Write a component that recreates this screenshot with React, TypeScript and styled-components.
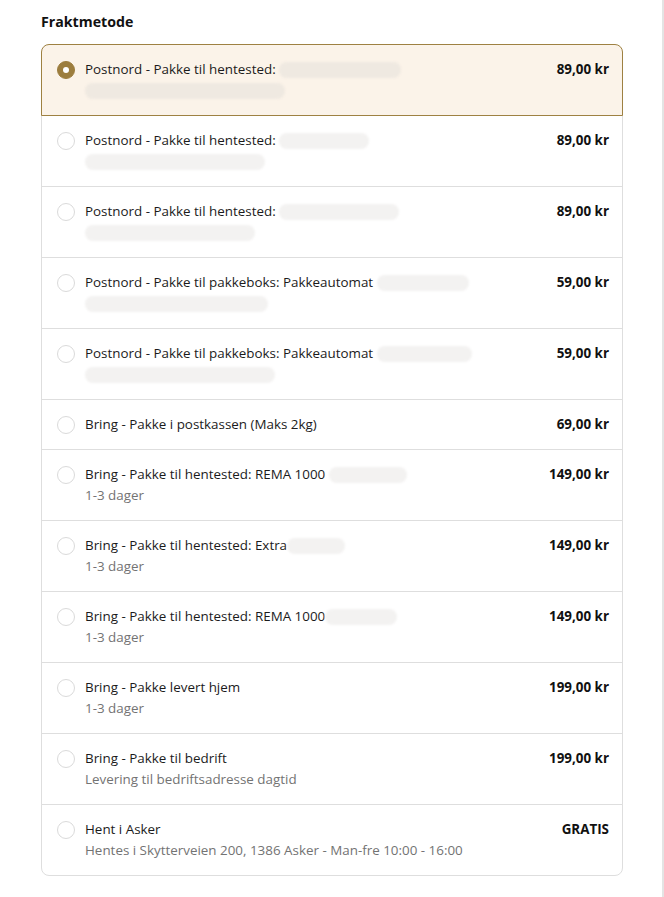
import React from "react";
import styled, { createGlobalStyle } from "styled-components";

const Global = createGlobalStyle`
  html, body { margin: 0; padding: 0; background: #ffffff; }
  body { font-family: "Open Sans", "Noto Sans", Arial, sans-serif; color: #1b1b1b; }
  * { box-sizing: border-box; }
`;

const Page = styled.div`
  width: 664px;
  min-height: 897px;
  display: flex;
`;

const Main = styled.main`
  width: 664px;
  border-right: 2px solid #e4e4e4;
  padding: 11px 39px 20px 41px;
`;

const Heading = styled.h2`
  margin: 0 0 11px;
  font-size: 14.2px;
  line-height: 22px;
  font-weight: 700;
  color: #111;
`;

const Card = styled.div`
  display: flex;
  flex-direction: column;
`;

const Row = styled.label<{ $selected?: boolean; $first?: boolean; $last?: boolean }>`
  position: relative;
  display: flex;
  align-items: flex-start;
  gap: 10px;
  padding: 14px 13px 14px 15px;
  margin-top: ${(p) => (p.$first ? "0" : "-1px")};
  border: 1px solid ${(p) => (p.$selected ? "#9e8142" : "#dedede")};
  background: ${(p) => (p.$selected ? "#fbf3e9" : "#ffffff")};
  border-radius: ${(p) => (p.$first ? "8px 8px 0 0" : p.$last ? "0 0 8px 8px" : "0")};
  z-index: ${(p) => (p.$selected ? 1 : 0)};
  cursor: pointer;
`;

const Radio = styled.span<{ $checked?: boolean }>`
  flex: 0 0 18px;
  width: 18px;
  height: 18px;
  margin-top: 1.5px;
  border-radius: 50%;
  display: flex;
  align-items: center;
  justify-content: center;
  background: ${(p) => (p.$checked ? "#9c7d3e" : "#ffffff")};
  border: 1px solid ${(p) => (p.$checked ? "#9c7d3e" : "#dadada")};
  &::after {
    content: "";
    display: ${(p) => (p.$checked ? "block" : "none")};
    width: 6px;
    height: 6px;
    border-radius: 50%;
    background: #ffffff;
  }
`;

const Info = styled.div`
  flex: 1;
  min-width: 0;
  display: flex;
  flex-direction: column;
`;

const Title = styled.div`
  font-size: 13.4px;
  line-height: 21px;
  color: #1b1b1b;
  white-space: nowrap;
`;

const Sub = styled.div`
  font-size: 13.4px;
  line-height: 21px;
  color: #737373;
  white-space: nowrap;
`;

const Price = styled.div`
  font-size: 13.4px;
  line-height: 21px;
  font-weight: 700;
  color: #111;
  white-space: nowrap;
`;

const Blob = styled.span<{ $w: number; $tint?: boolean }>`
  display: inline-block;
  vertical-align: middle;
  width: ${(p) => p.$w}px;
  height: 16px;
  border-radius: 9px;
  background: ${(p) => (p.$tint ? "#efe9e1" : "#f3f2f1")};
  filter: blur(0.8px);
`;

const BlobLine = styled.div`
  height: 21px;
  display: flex;
  align-items: center;
`;

type Opt = {
  title: string;
  titleBlob?: number;
  sub?: string;
  subBlob?: number;
  price: string;
  selected?: boolean;
};

const options: Opt[] = [
  { title: "Postnord - Pakke til hentested: ", titleBlob: 122, subBlob: 200, price: "89,00 kr", selected: true },
  { title: "Postnord - Pakke til hentested: ", titleBlob: 90, subBlob: 180, price: "89,00 kr" },
  { title: "Postnord - Pakke til hentested: ", titleBlob: 120, subBlob: 170, price: "89,00 kr" },
  { title: "Postnord - Pakke til pakkeboks: Pakkeautomat ", titleBlob: 92, subBlob: 183, price: "59,00 kr" },
  { title: "Postnord - Pakke til pakkeboks: Pakkeautomat ", titleBlob: 95, subBlob: 190, price: "59,00 kr" },
  { title: "Bring - Pakke i postkassen (Maks 2kg)", price: "69,00 kr" },
  { title: "Bring - Pakke til hentested: REMA 1000 ", titleBlob: 78, sub: "1-3 dager", price: "149,00 kr" },
  { title: "Bring - Pakke til hentested: Extra", titleBlob: 58, sub: "1-3 dager", price: "149,00 kr" },
  { title: "Bring - Pakke til hentested: REMA 1000", titleBlob: 72, sub: "1-3 dager", price: "149,00 kr" },
  { title: "Bring - Pakke levert hjem", sub: "1-3 dager", price: "199,00 kr" },
  { title: "Bring - Pakke til bedrift", sub: "Levering til bedriftsadresse dagtid", price: "199,00 kr" },
  { title: "Hent i Asker", sub: "Hentes i Skytterveien 200, 1386 Asker - Man-fre 10:00 - 16:00", price: "GRATIS" },
];

export default function App() {
  return (
    <Page>
      <Global />
      <Main>
        <Heading>Fraktmetode</Heading>
        <Card>
          {options.map((o, i) => (
            <Row
              key={i}
              $selected={o.selected}
              $first={i === 0}
              $last={i === options.length - 1}
            >
              <Radio $checked={o.selected} />
              <Info>
                <Title>
                  {o.title}
                  {o.titleBlob ? <Blob $w={o.titleBlob} $tint={o.selected} /> : null}
                </Title>
                {o.sub ? <Sub>{o.sub}</Sub> : null}
                {o.subBlob ? (
                  <BlobLine>
                    <Blob $w={o.subBlob} $tint={o.selected} />
                  </BlobLine>
                ) : null}
              </Info>
              <Price>{o.price}</Price>
            </Row>
          ))}
        </Card>
      </Main>
    </Page>
  );
}
